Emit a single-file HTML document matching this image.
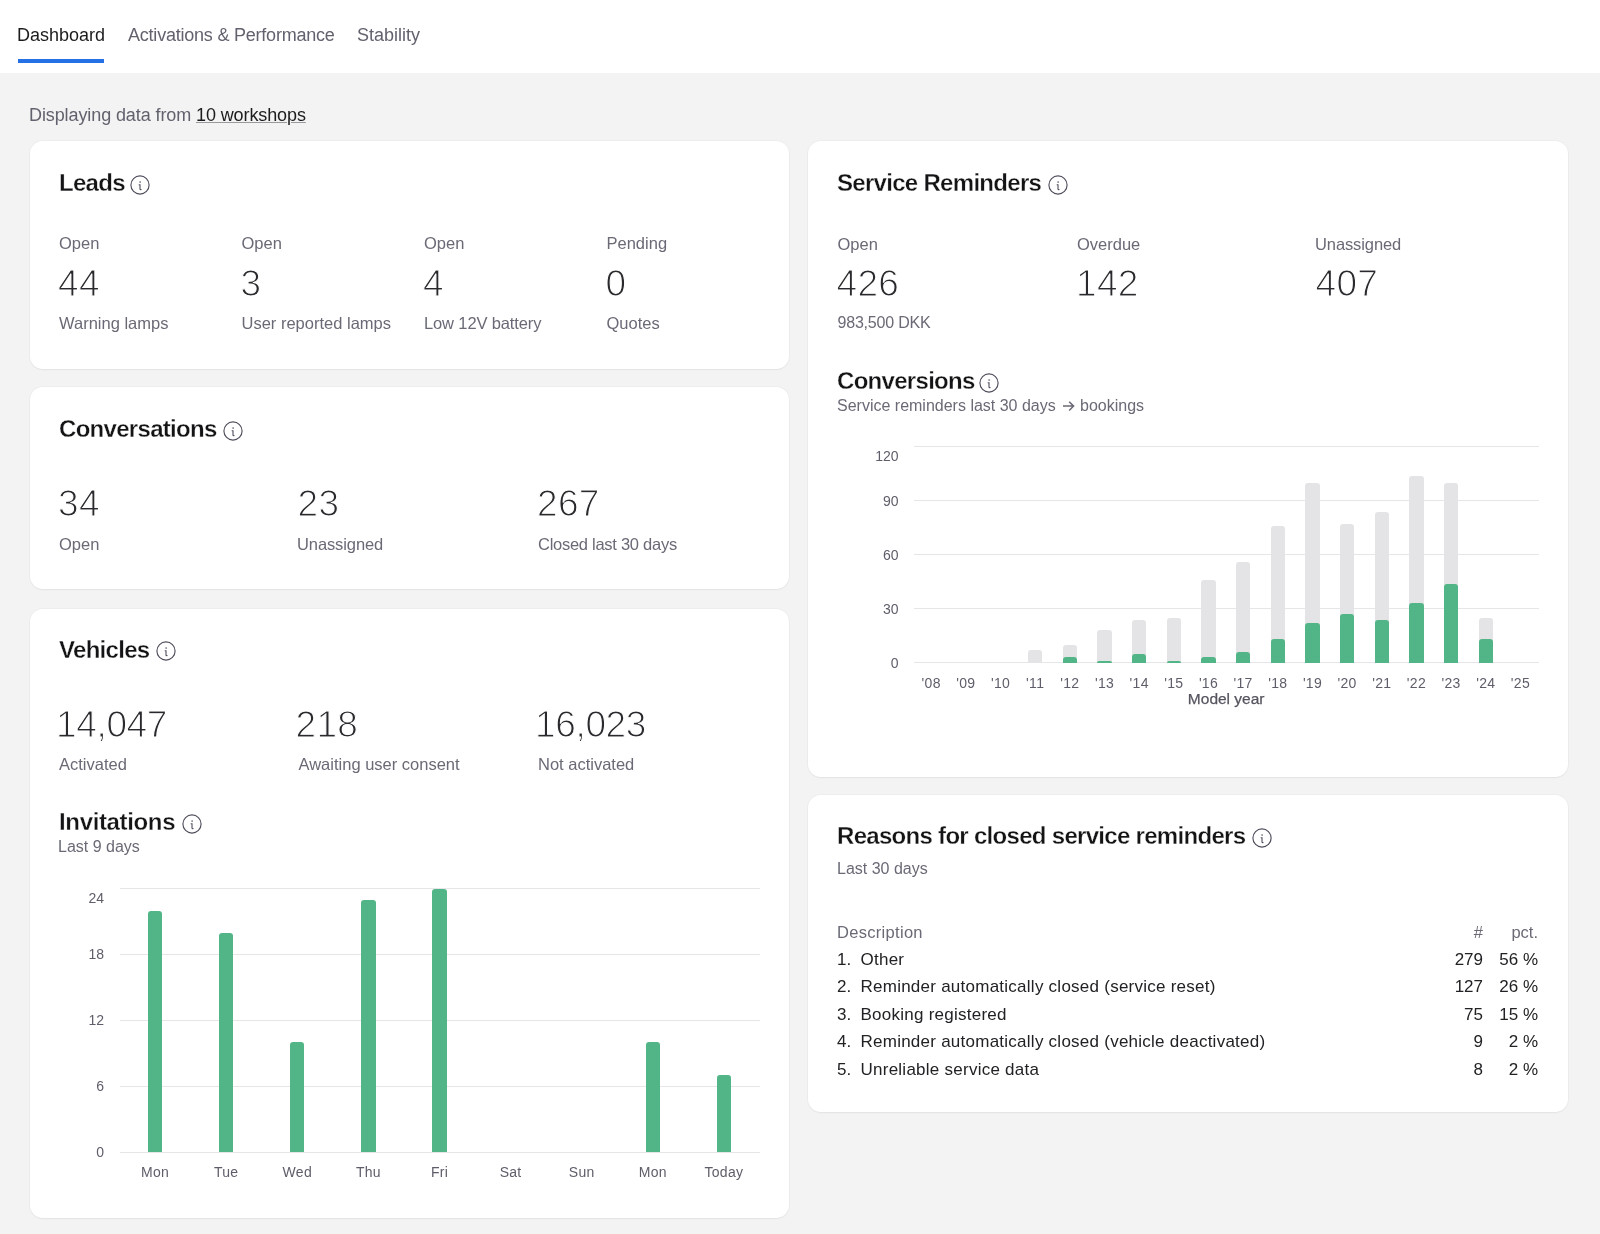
<!DOCTYPE html>
<html><head><meta charset="utf-8"><style>
html,body{margin:0;padding:0;}
body{width:1600px;height:1234px;position:relative;overflow:hidden;background:#f3f3f3;font-family:"Liberation Sans", sans-serif;}
#w{position:absolute;left:0;top:0;width:1600px;height:1234px;will-change:transform;}
.t{position:absolute;white-space:nowrap;line-height:1;}
.r{position:absolute;}
.card{position:absolute;background:#fff;border-radius:13px;box-shadow:0 0 0 1px rgba(0,0,0,0.025),0 1px 2px rgba(0,0,0,0.05);}
.ic{position:absolute;}
.light{-webkit-text-stroke:1.1px #fff;}
.sb{-webkit-text-stroke:0.3px #fff;}
.bar{position:absolute;border-radius:3px 3px 0 0;}
.g{background:#52b587;}
.gr{background:#e4e4e7;}
</style></head><body><div id="w">
<div class="r" style="left:0px;top:0px;width:1600px;height:73px;background:#ffffff;"></div>
<div class="t " style="left:17.00px;top:26.26px;font-size:18px;color:#1c1c1e;">Dashboard</div>
<div class="t " style="left:128.00px;top:26.26px;font-size:18px;color:#62626e;letter-spacing:-0.22px;">Activations &amp; Performance</div>
<div class="t " style="left:357.00px;top:26.26px;font-size:18px;color:#62626e;">Stability</div>
<div class="r" style="left:18px;top:59.3px;width:85.5px;height:3.4px;background:#2670e6;"></div>
<div class="t " style="left:29.00px;top:105.76px;font-size:18px;color:#62626e;letter-spacing:-0.1px;">Displaying data from <span style="color:#1c1c1e;text-decoration:underline;text-decoration-color:#9a9a9e;text-underline-offset:1px;text-decoration-thickness:1px">10 workshops</span></div>
<div class="card" style="left:30px;top:141px;width:759px;height:228px"></div>
<div class="card" style="left:30px;top:386.5px;width:759px;height:202.5px"></div>
<div class="card" style="left:30px;top:609px;width:759px;height:609px"></div>
<div class="card" style="left:808px;top:141px;width:760px;height:635.5px"></div>
<div class="card" style="left:808px;top:795px;width:760px;height:317px"></div>
<div class="t sb" style="left:59.00px;top:170.68px;font-size:24px;color:#141416;font-weight:700;letter-spacing:-0.7px;">Leads</div>
<svg class="ic" style="left:129.75px;top:174.70px" width="20" height="20" viewBox="0 0 20 20"><circle cx="10" cy="10" r="9.1" fill="none" stroke="#4e4e5c" stroke-width="1.15"/><circle cx="10.1" cy="7.1" r="0.8" fill="#4e4e5c"/><path d="M8.7 9.8H10V14.1Q10.2 14.8 11.5 14.5" fill="none" stroke="#4e4e5c" stroke-width="1.1"/></svg>
<div class="t " style="left:59.00px;top:235.43px;font-size:16.5px;color:#6a6a76;">Open</div>
<div class="t light" style="left:58.00px;top:264.68px;font-size:37px;color:#2a2a2e;letter-spacing:0.3px;">44</div>
<div class="t " style="left:59.00px;top:314.78px;font-size:16.5px;color:#6a6a76;">Warning lamps</div>
<div class="t " style="left:241.50px;top:235.43px;font-size:16.5px;color:#6a6a76;">Open</div>
<div class="t light" style="left:240.50px;top:264.68px;font-size:37px;color:#2a2a2e;letter-spacing:0.3px;">3</div>
<div class="t " style="left:241.50px;top:314.78px;font-size:16.5px;color:#6a6a76;">User reported lamps</div>
<div class="t " style="left:424.00px;top:235.43px;font-size:16.5px;color:#6a6a76;">Open</div>
<div class="t light" style="left:423.00px;top:264.68px;font-size:37px;color:#2a2a2e;letter-spacing:0.3px;">4</div>
<div class="t " style="left:424.00px;top:314.78px;font-size:16.5px;color:#6a6a76;letter-spacing:-0.13px;">Low 12V battery</div>
<div class="t " style="left:606.50px;top:235.43px;font-size:16.5px;color:#6a6a76;">Pending</div>
<div class="t light" style="left:605.50px;top:264.68px;font-size:37px;color:#2a2a2e;letter-spacing:0.3px;">0</div>
<div class="t " style="left:606.50px;top:314.78px;font-size:16.5px;color:#6a6a76;">Quotes</div>
<div class="t sb" style="left:59.00px;top:416.68px;font-size:24px;color:#141416;font-weight:700;letter-spacing:-0.7px;">Conversations</div>
<svg class="ic" style="left:223.40px;top:420.80px" width="20" height="20" viewBox="0 0 20 20"><circle cx="10" cy="10" r="9.1" fill="none" stroke="#4e4e5c" stroke-width="1.15"/><circle cx="10.1" cy="7.1" r="0.8" fill="#4e4e5c"/><path d="M8.7 9.8H10V14.1Q10.2 14.8 11.5 14.5" fill="none" stroke="#4e4e5c" stroke-width="1.1"/></svg>
<div class="t light" style="left:58.00px;top:485.48px;font-size:37px;color:#2a2a2e;letter-spacing:0.3px;">34</div>
<div class="t " style="left:59.00px;top:535.53px;font-size:16.5px;color:#6a6a76;">Open</div>
<div class="t light" style="left:297.50px;top:485.48px;font-size:37px;color:#2a2a2e;letter-spacing:0.3px;">23</div>
<div class="t " style="left:297.00px;top:535.53px;font-size:16.5px;color:#6a6a76;letter-spacing:-0.1px;">Unassigned</div>
<div class="t light" style="left:537.00px;top:485.48px;font-size:37px;color:#2a2a2e;letter-spacing:0.3px;">267</div>
<div class="t " style="left:538.00px;top:535.53px;font-size:16.5px;color:#6a6a76;letter-spacing:-0.27px;">Closed last 30 days</div>
<div class="t sb" style="left:59.00px;top:637.68px;font-size:24px;color:#141416;font-weight:700;letter-spacing:-0.7px;">Vehicles</div>
<svg class="ic" style="left:156.00px;top:641.30px" width="20" height="20" viewBox="0 0 20 20"><circle cx="10" cy="10" r="9.1" fill="none" stroke="#4e4e5c" stroke-width="1.15"/><circle cx="10.1" cy="7.1" r="0.8" fill="#4e4e5c"/><path d="M8.7 9.8H10V14.1Q10.2 14.8 11.5 14.5" fill="none" stroke="#4e4e5c" stroke-width="1.1"/></svg>
<div class="t light" style="left:56.00px;top:706.48px;font-size:37px;color:#2a2a2e;letter-spacing:-0.35px;">14,047</div>
<div class="t " style="left:59.00px;top:756.03px;font-size:16.5px;color:#6a6a76;">Activated</div>
<div class="t light" style="left:295.50px;top:706.48px;font-size:37px;color:#2a2a2e;letter-spacing:0.3px;">218</div>
<div class="t " style="left:298.50px;top:756.03px;font-size:16.5px;color:#6a6a76;">Awaiting user consent</div>
<div class="t light" style="left:535.00px;top:706.48px;font-size:37px;color:#2a2a2e;letter-spacing:-0.35px;">16,023</div>
<div class="t " style="left:538.00px;top:756.03px;font-size:16.5px;color:#6a6a76;">Not activated</div>
<div class="t sb" style="left:59.00px;top:809.88px;font-size:24px;color:#141416;font-weight:700;letter-spacing:-0.35px;">Invitations</div>
<svg class="ic" style="left:182.00px;top:814.40px" width="20" height="20" viewBox="0 0 20 20"><circle cx="10" cy="10" r="9.1" fill="none" stroke="#4e4e5c" stroke-width="1.15"/><circle cx="10.1" cy="7.1" r="0.8" fill="#4e4e5c"/><path d="M8.7 9.8H10V14.1Q10.2 14.8 11.5 14.5" fill="none" stroke="#4e4e5c" stroke-width="1.1"/></svg>
<div class="t " style="left:58.00px;top:839.06px;font-size:16px;color:#6a6a76;">Last 9 days</div>
<div class="r" style="left:120px;top:1151.7px;width:640px;height:1px;background:#e6e6e9;"></div>
<div class="t " style="right:1496.00px;top:1145.05px;font-size:14px;color:#5e5e6a;">0</div>
<div class="r" style="left:120px;top:1085.8px;width:640px;height:1px;background:#e6e6e9;"></div>
<div class="t " style="right:1496.00px;top:1079.15px;font-size:14px;color:#5e5e6a;">6</div>
<div class="r" style="left:120px;top:1019.9px;width:640px;height:1px;background:#e6e6e9;"></div>
<div class="t " style="right:1496.00px;top:1013.25px;font-size:14px;color:#5e5e6a;">12</div>
<div class="r" style="left:120px;top:954.0px;width:640px;height:1px;background:#e6e6e9;"></div>
<div class="t " style="right:1496.00px;top:947.35px;font-size:14px;color:#5e5e6a;">18</div>
<div class="r" style="left:120px;top:888.1px;width:640px;height:1px;background:#e6e6e9;"></div>
<div class="t " style="right:1496.00px;top:890.65px;font-size:14px;color:#5e5e6a;">24</div>
<div class="bar g" style="left:147.90px;top:910.57px;width:14.4px;height:241.63px"></div>
<div class="t " style="left:155.10px;top:1165.05px;font-size:14px;color:#5e5e6a;letter-spacing:0.3px;transform:translateX(-50%);">Mon</div>
<div class="bar g" style="left:219.00px;top:932.53px;width:14.4px;height:219.67px"></div>
<div class="t " style="left:226.20px;top:1165.05px;font-size:14px;color:#5e5e6a;letter-spacing:0.3px;transform:translateX(-50%);">Tue</div>
<div class="bar g" style="left:290.10px;top:1042.37px;width:14.4px;height:109.83px"></div>
<div class="t " style="left:297.30px;top:1165.05px;font-size:14px;color:#5e5e6a;letter-spacing:0.3px;transform:translateX(-50%);">Wed</div>
<div class="bar g" style="left:361.20px;top:899.58px;width:14.4px;height:252.62px"></div>
<div class="t " style="left:368.40px;top:1165.05px;font-size:14px;color:#5e5e6a;letter-spacing:0.3px;transform:translateX(-50%);">Thu</div>
<div class="bar g" style="left:432.30px;top:888.60px;width:14.4px;height:263.60px"></div>
<div class="t " style="left:439.50px;top:1165.05px;font-size:14px;color:#5e5e6a;letter-spacing:0.3px;transform:translateX(-50%);">Fri</div>
<div class="t " style="left:510.60px;top:1165.05px;font-size:14px;color:#5e5e6a;letter-spacing:0.3px;transform:translateX(-50%);">Sat</div>
<div class="t " style="left:581.70px;top:1165.05px;font-size:14px;color:#5e5e6a;letter-spacing:0.3px;transform:translateX(-50%);">Sun</div>
<div class="bar g" style="left:645.60px;top:1042.37px;width:14.4px;height:109.83px"></div>
<div class="t " style="left:652.80px;top:1165.05px;font-size:14px;color:#5e5e6a;letter-spacing:0.3px;transform:translateX(-50%);">Mon</div>
<div class="bar g" style="left:716.70px;top:1075.32px;width:14.4px;height:76.88px"></div>
<div class="t " style="left:723.90px;top:1165.05px;font-size:14px;color:#5e5e6a;letter-spacing:0.3px;transform:translateX(-50%);">Today</div>
<div class="t sb" style="left:837.00px;top:170.58px;font-size:24px;color:#141416;font-weight:700;letter-spacing:-0.7px;">Service Reminders</div>
<svg class="ic" style="left:1047.70px;top:174.50px" width="20" height="20" viewBox="0 0 20 20"><circle cx="10" cy="10" r="9.1" fill="none" stroke="#4e4e5c" stroke-width="1.15"/><circle cx="10.1" cy="7.1" r="0.8" fill="#4e4e5c"/><path d="M8.7 9.8H10V14.1Q10.2 14.8 11.5 14.5" fill="none" stroke="#4e4e5c" stroke-width="1.1"/></svg>
<div class="t " style="left:837.50px;top:236.03px;font-size:16.5px;color:#6a6a76;">Open</div>
<div class="t light" style="left:836.50px;top:264.68px;font-size:37px;color:#2a2a2e;letter-spacing:0.3px;">426</div>
<div class="t " style="left:837.50px;top:315.21px;font-size:16px;color:#6a6a76;letter-spacing:-0.2px;">983,500 DKK</div>
<div class="t " style="left:1077.00px;top:236.03px;font-size:16.5px;color:#6a6a76;">Overdue</div>
<div class="t light" style="left:1076.00px;top:264.68px;font-size:37px;color:#2a2a2e;letter-spacing:0.3px;">142</div>
<div class="t " style="left:1315.00px;top:236.03px;font-size:16.5px;color:#6a6a76;letter-spacing:-0.1px;">Unassigned</div>
<div class="t light" style="left:1315.50px;top:264.68px;font-size:37px;color:#2a2a2e;letter-spacing:0.3px;">407</div>
<div class="t sb" style="left:837.00px;top:368.58px;font-size:24px;color:#141416;font-weight:700;letter-spacing:-0.7px;">Conversions</div>
<svg class="ic" style="left:979.30px;top:373.20px" width="20" height="20" viewBox="0 0 20 20"><circle cx="10" cy="10" r="9.1" fill="none" stroke="#4e4e5c" stroke-width="1.15"/><circle cx="10.1" cy="7.1" r="0.8" fill="#4e4e5c"/><path d="M8.7 9.8H10V14.1Q10.2 14.8 11.5 14.5" fill="none" stroke="#4e4e5c" stroke-width="1.1"/></svg>
<div class="t " style="left:837.00px;top:397.66px;font-size:16px;color:#6a6a76;">Service reminders last 30 days</div>
<div class="t " style="left:1080.00px;top:397.66px;font-size:16px;color:#6a6a76;">bookings</div>
<svg class="ic" style="left:1060px;top:399px" width="16" height="14" viewBox="0 0 16 14"><path d="M3 7.1H13.6M9.2 2.7L13.6 7.1L9.2 11.5" fill="none" stroke="#6a6a76" stroke-width="1.5"/></svg>
<div class="r" style="left:913.7px;top:662.3px;width:625.2px;height:1px;background:#e6e6e9;"></div>
<div class="t " style="right:701.50px;top:655.65px;font-size:14px;color:#5e5e6a;">0</div>
<div class="r" style="left:913.7px;top:608.3px;width:625.2px;height:1px;background:#e6e6e9;"></div>
<div class="t " style="right:701.50px;top:601.65px;font-size:14px;color:#5e5e6a;">30</div>
<div class="r" style="left:913.7px;top:554.3px;width:625.2px;height:1px;background:#e6e6e9;"></div>
<div class="t " style="right:701.50px;top:547.65px;font-size:14px;color:#5e5e6a;">60</div>
<div class="r" style="left:913.7px;top:500.3px;width:625.2px;height:1px;background:#e6e6e9;"></div>
<div class="t " style="right:701.50px;top:493.65px;font-size:14px;color:#5e5e6a;">90</div>
<div class="r" style="left:913.7px;top:446.3px;width:625.2px;height:1px;background:#e6e6e9;"></div>
<div class="t " style="right:701.50px;top:449.15px;font-size:14px;color:#5e5e6a;">120</div>
<div class="t " style="left:931.20px;top:675.95px;font-size:14px;color:#5e5e6a;letter-spacing:0.3px;transform:translateX(-50%);">'08</div>
<div class="t " style="left:965.86px;top:675.95px;font-size:14px;color:#5e5e6a;letter-spacing:0.3px;transform:translateX(-50%);">'09</div>
<div class="t " style="left:1000.52px;top:675.95px;font-size:14px;color:#5e5e6a;letter-spacing:0.3px;transform:translateX(-50%);">'10</div>
<div class="bar gr" style="left:1027.98px;top:650.20px;width:14.4px;height:12.60px"></div>
<div class="t " style="left:1035.18px;top:675.95px;font-size:14px;color:#5e5e6a;letter-spacing:0.3px;transform:translateX(-50%);">'11</div>
<div class="bar gr" style="left:1062.64px;top:644.80px;width:14.4px;height:18.00px"></div>
<div class="bar g" style="left:1062.64px;top:657.40px;width:14.4px;height:5.40px"></div>
<div class="t " style="left:1069.84px;top:675.95px;font-size:14px;color:#5e5e6a;letter-spacing:0.3px;transform:translateX(-50%);">'12</div>
<div class="bar gr" style="left:1097.30px;top:630.40px;width:14.4px;height:32.40px"></div>
<div class="bar g" style="left:1097.30px;top:661.00px;width:14.4px;height:1.80px"></div>
<div class="t " style="left:1104.50px;top:675.95px;font-size:14px;color:#5e5e6a;letter-spacing:0.3px;transform:translateX(-50%);">'13</div>
<div class="bar gr" style="left:1131.96px;top:619.60px;width:14.4px;height:43.20px"></div>
<div class="bar g" style="left:1131.96px;top:653.80px;width:14.4px;height:9.00px"></div>
<div class="t " style="left:1139.16px;top:675.95px;font-size:14px;color:#5e5e6a;letter-spacing:0.3px;transform:translateX(-50%);">'14</div>
<div class="bar gr" style="left:1166.62px;top:617.80px;width:14.4px;height:45.00px"></div>
<div class="bar g" style="left:1166.62px;top:661.00px;width:14.4px;height:1.80px"></div>
<div class="t " style="left:1173.82px;top:675.95px;font-size:14px;color:#5e5e6a;letter-spacing:0.3px;transform:translateX(-50%);">'15</div>
<div class="bar gr" style="left:1201.28px;top:580.00px;width:14.4px;height:82.80px"></div>
<div class="bar g" style="left:1201.28px;top:657.40px;width:14.4px;height:5.40px"></div>
<div class="t " style="left:1208.48px;top:675.95px;font-size:14px;color:#5e5e6a;letter-spacing:0.3px;transform:translateX(-50%);">'16</div>
<div class="bar gr" style="left:1235.94px;top:562.00px;width:14.4px;height:100.80px"></div>
<div class="bar g" style="left:1235.94px;top:652.00px;width:14.4px;height:10.80px"></div>
<div class="t " style="left:1243.14px;top:675.95px;font-size:14px;color:#5e5e6a;letter-spacing:0.3px;transform:translateX(-50%);">'17</div>
<div class="bar gr" style="left:1270.60px;top:526.00px;width:14.4px;height:136.80px"></div>
<div class="bar g" style="left:1270.60px;top:639.40px;width:14.4px;height:23.40px"></div>
<div class="t " style="left:1277.80px;top:675.95px;font-size:14px;color:#5e5e6a;letter-spacing:0.3px;transform:translateX(-50%);">'18</div>
<div class="bar gr" style="left:1305.26px;top:482.80px;width:14.4px;height:180.00px"></div>
<div class="bar g" style="left:1305.26px;top:623.20px;width:14.4px;height:39.60px"></div>
<div class="t " style="left:1312.46px;top:675.95px;font-size:14px;color:#5e5e6a;letter-spacing:0.3px;transform:translateX(-50%);">'19</div>
<div class="bar gr" style="left:1339.92px;top:524.20px;width:14.4px;height:138.60px"></div>
<div class="bar g" style="left:1339.92px;top:614.20px;width:14.4px;height:48.60px"></div>
<div class="t " style="left:1347.12px;top:675.95px;font-size:14px;color:#5e5e6a;letter-spacing:0.3px;transform:translateX(-50%);">'20</div>
<div class="bar gr" style="left:1374.58px;top:511.60px;width:14.4px;height:151.20px"></div>
<div class="bar g" style="left:1374.58px;top:619.60px;width:14.4px;height:43.20px"></div>
<div class="t " style="left:1381.78px;top:675.95px;font-size:14px;color:#5e5e6a;letter-spacing:0.3px;transform:translateX(-50%);">'21</div>
<div class="bar gr" style="left:1409.24px;top:475.60px;width:14.4px;height:187.20px"></div>
<div class="bar g" style="left:1409.24px;top:603.40px;width:14.4px;height:59.40px"></div>
<div class="t " style="left:1416.44px;top:675.95px;font-size:14px;color:#5e5e6a;letter-spacing:0.3px;transform:translateX(-50%);">'22</div>
<div class="bar gr" style="left:1443.90px;top:482.80px;width:14.4px;height:180.00px"></div>
<div class="bar g" style="left:1443.90px;top:583.60px;width:14.4px;height:79.20px"></div>
<div class="t " style="left:1451.10px;top:675.95px;font-size:14px;color:#5e5e6a;letter-spacing:0.3px;transform:translateX(-50%);">'23</div>
<div class="bar gr" style="left:1478.56px;top:617.80px;width:14.4px;height:45.00px"></div>
<div class="bar g" style="left:1478.56px;top:639.40px;width:14.4px;height:23.40px"></div>
<div class="t " style="left:1485.76px;top:675.95px;font-size:14px;color:#5e5e6a;letter-spacing:0.3px;transform:translateX(-50%);">'24</div>
<div class="t " style="left:1520.42px;top:675.95px;font-size:14px;color:#5e5e6a;letter-spacing:0.3px;transform:translateX(-50%);">'25</div>
<div class="t " style="left:1226.20px;top:690.78px;font-size:15.5px;color:#55555f;transform:translateX(-50%);-webkit-text-stroke:0.25px #55555f;">Model year</div>
<div class="t sb" style="left:837.00px;top:824.28px;font-size:24px;color:#141416;font-weight:700;letter-spacing:-0.7px;">Reasons for closed service reminders</div>
<svg class="ic" style="left:1252.40px;top:828.00px" width="20" height="20" viewBox="0 0 20 20"><circle cx="10" cy="10" r="9.1" fill="none" stroke="#4e4e5c" stroke-width="1.15"/><circle cx="10.1" cy="7.1" r="0.8" fill="#4e4e5c"/><path d="M8.7 9.8H10V14.1Q10.2 14.8 11.5 14.5" fill="none" stroke="#4e4e5c" stroke-width="1.1"/></svg>
<div class="t " style="left:837.00px;top:861.06px;font-size:16px;color:#6a6a76;">Last 30 days</div>
<div class="t " style="left:837.00px;top:923.83px;font-size:16.5px;color:#6a6a76;letter-spacing:0.3px;">Description</div>
<div class="t " style="right:117.00px;top:923.83px;font-size:16.5px;color:#6a6a76;">#</div>
<div class="t " style="right:62.00px;top:923.83px;font-size:16.5px;color:#6a6a76;">pct.</div>
<div class="t " style="left:837.00px;top:951.01px;font-size:17px;color:#222226;">1.</div>
<div class="t " style="left:860.50px;top:951.01px;font-size:17px;color:#222226;letter-spacing:0.25px;">Other</div>
<div class="t " style="right:117.00px;top:951.01px;font-size:17px;color:#222226;">279</div>
<div class="t " style="right:62.00px;top:951.01px;font-size:17px;color:#222226;">56 %</div>
<div class="t " style="left:837.00px;top:977.81px;font-size:17px;color:#222226;">2.</div>
<div class="t " style="left:860.50px;top:977.81px;font-size:17px;color:#222226;letter-spacing:0.25px;">Reminder automatically closed (service reset)</div>
<div class="t " style="right:117.00px;top:977.81px;font-size:17px;color:#222226;">127</div>
<div class="t " style="right:62.00px;top:977.81px;font-size:17px;color:#222226;">26 %</div>
<div class="t " style="left:837.00px;top:1005.61px;font-size:17px;color:#222226;">3.</div>
<div class="t " style="left:860.50px;top:1005.61px;font-size:17px;color:#222226;letter-spacing:0.25px;">Booking registered</div>
<div class="t " style="right:117.00px;top:1005.61px;font-size:17px;color:#222226;">75</div>
<div class="t " style="right:62.00px;top:1005.61px;font-size:17px;color:#222226;">15 %</div>
<div class="t " style="left:837.00px;top:1033.21px;font-size:17px;color:#222226;">4.</div>
<div class="t " style="left:860.50px;top:1033.21px;font-size:17px;color:#222226;letter-spacing:0.25px;">Reminder automatically closed (vehicle deactivated)</div>
<div class="t " style="right:117.00px;top:1033.21px;font-size:17px;color:#222226;">9</div>
<div class="t " style="right:62.00px;top:1033.21px;font-size:17px;color:#222226;">2 %</div>
<div class="t " style="left:837.00px;top:1060.51px;font-size:17px;color:#222226;">5.</div>
<div class="t " style="left:860.50px;top:1060.51px;font-size:17px;color:#222226;letter-spacing:0.25px;">Unreliable service data</div>
<div class="t " style="right:117.00px;top:1060.51px;font-size:17px;color:#222226;">8</div>
<div class="t " style="right:62.00px;top:1060.51px;font-size:17px;color:#222226;">2 %</div>
</div></body></html>
